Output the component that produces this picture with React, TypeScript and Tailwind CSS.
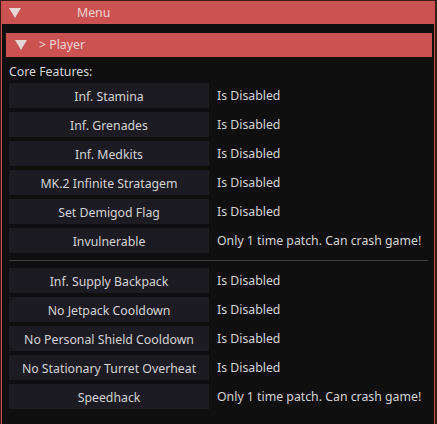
import React from 'react'

type Row = { label: string; status: string }

const CORE: Row[] = [
  { label: 'Inf. Stamina', status: 'Is Disabled' },
  { label: 'Inf. Grenades', status: 'Is Disabled' },
  { label: 'Inf. Medkits', status: 'Is Disabled' },
  { label: 'MK.2 Infinite Stratagem', status: 'Is Disabled' },
  { label: 'Set Demigod Flag', status: 'Is Disabled' },
  { label: 'Invulnerable', status: 'Only 1 time patch. Can crash game!' },
]

const EXTRA: Row[] = [
  { label: 'Inf. Supply Backpack', status: 'Is Disabled' },
  { label: 'No Jetpack Cooldown', status: 'Is Disabled' },
  { label: 'No Personal Shield Cooldown', status: 'Is Disabled' },
  { label: 'No Stationary Turret Overheat', status: 'Is Disabled' },
  { label: 'Speedhack', status: 'Only 1 time patch. Can crash game!' },
]

function Triangle() {
  return (
    <svg width="12" height="10" viewBox="0 0 12 10" className="shrink-0">
      <polygon points="0,0 12,0 6,10" fill="#e6d6d6" />
    </svg>
  )
}

function Rows({ rows }: { rows: Row[] }) {
  return (
    <div className="flex flex-col gap-[4px] pl-[7px]">
      {rows.map(r => (
        <div key={r.label} className="flex items-center gap-[8px] h-[25px]">
          <button className="w-[200px] h-[25px] bg-[#1c1b22] text-[#d4d4d4] text-center leading-[25px] pt-px">
            {r.label}
          </button>
          <span className="text-[#d4d4d4] whitespace-nowrap pt-px">{r.status}</span>
        </div>
      ))}
    </div>
  )
}

export default function App() {
  return (
    <div className="w-[437px] h-[424px] bg-[#3b1d18] pl-px pr-[2px] pt-px text-[12.3px] font-['Noto_Sans',sans-serif] overflow-hidden">
      <div className="h-full border-x border-[#c94d4d] bg-[#0f0f0f] flex flex-col">
        {/* Titelleiste */}
        <div className="h-[23px] bg-[#cc5252] flex items-center pl-[7px] shrink-0">
          <Triangle />
          <span className="ml-[56px] mt-[2px] text-[#ecd4d4]">Menu</span>
        </div>

        {/* Kopfzeile */}
        <div className="mt-[9px] ml-[4px] mr-[2px] h-[24px] bg-[#cc5252] flex items-center pl-[9px] shrink-0">
          <Triangle />
          <span className="ml-[12px] mt-px text-[#ecd4d4]">&gt; Player</span>
        </div>

        <div className="pl-[7px] mt-[5px] h-[21px] leading-[20px] text-[#d4d4d4]">Core Features:</div>

        <Rows rows={CORE} />

        <div className="my-[7px] ml-[7px] mr-[6px] h-px bg-[#3f3f45]" />

        <Rows rows={EXTRA} />
      </div>
    </div>
  )
}
